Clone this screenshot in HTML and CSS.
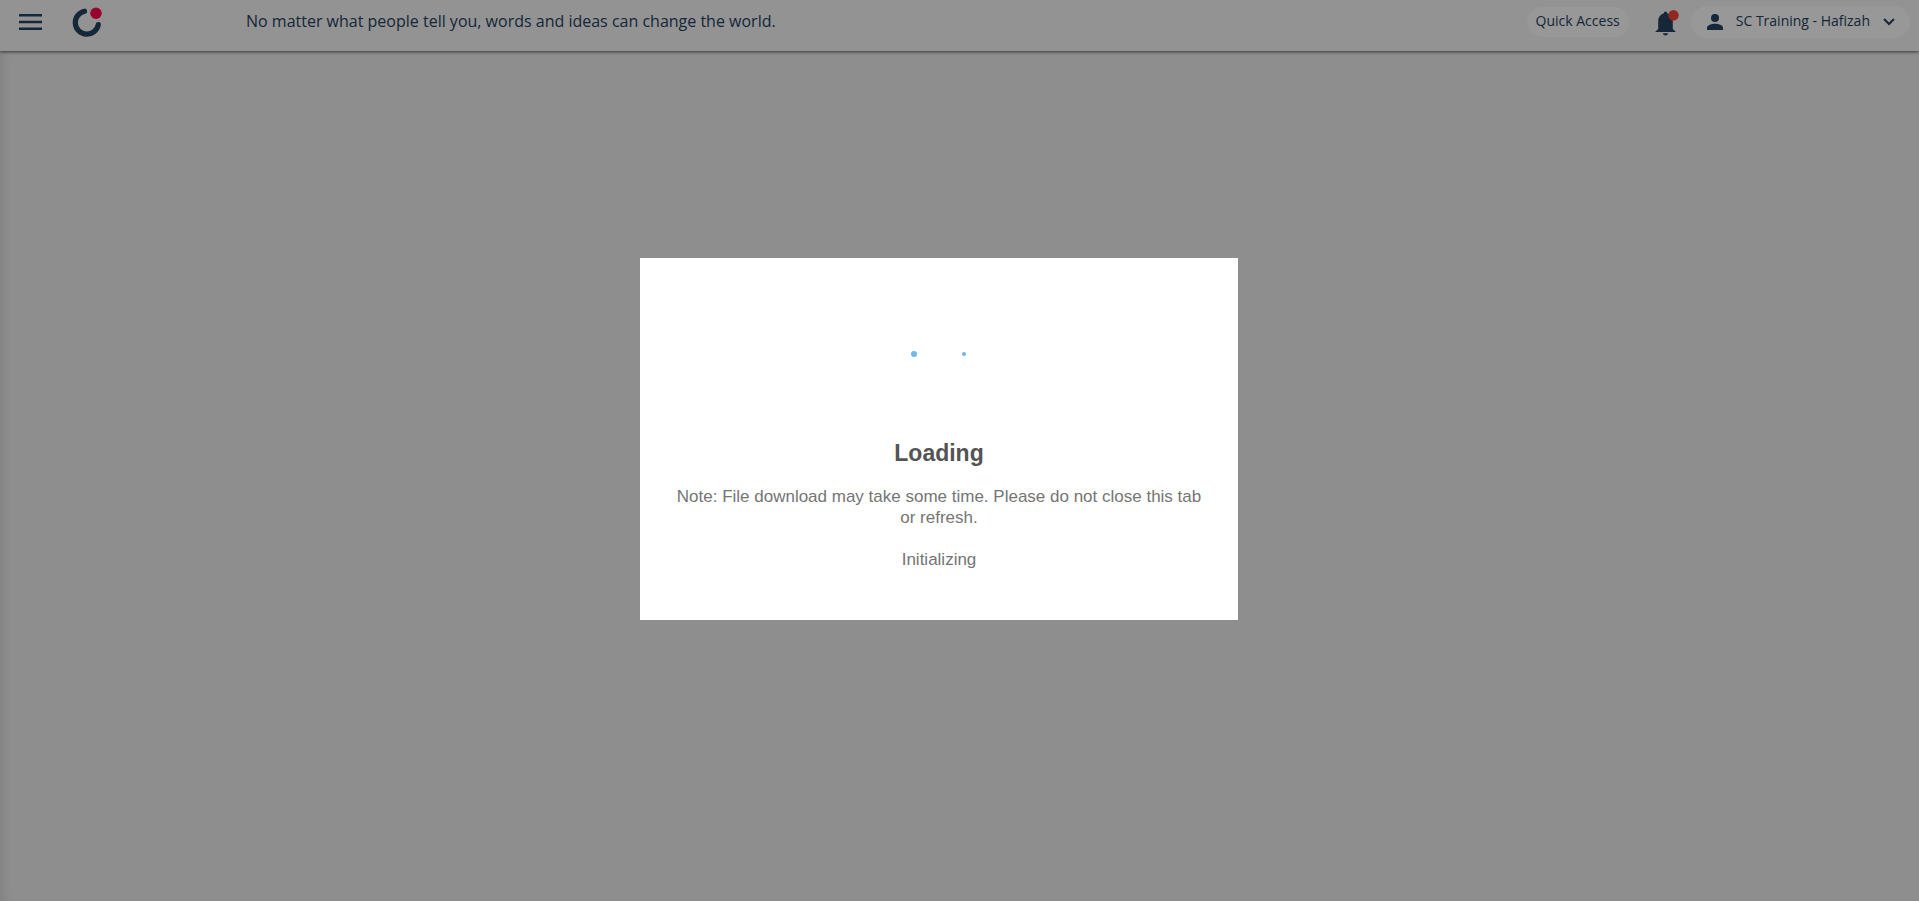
FILE: index.html
```html
<!DOCTYPE html>
<html lang="en">
<head>
<meta charset="utf-8">
<title>Loading</title>
<link rel="stylesheet" href="styles.css">
</head>
<body>
<header class="topbar">
  <button class="icon-button menu" type="button" aria-label="Menu">
    <svg width="23" height="16" viewBox="0 0 23 16"><path d="M0 1.200h23M0 8h23M0 14.800h23" stroke="currentColor" stroke-width="2.500"/></svg>
  </button>
  <a class="logo" href="#" aria-label="Home">
    <svg width="30" height="30" viewBox="0 0 30 30"><path d="M12.500 4.200A11.600 11.600 0 1 0 26.300 17.600" fill="none" stroke="currentColor" stroke-width="5.200" stroke-linecap="round"/><circle cx="24" cy="6.200" r="5.700" fill="#ff004c"/></svg>
  </a>
  <p class="quote">No matter what people tell you, words and ideas can change the world.</p>
  <button class="pill quick" type="button">Quick Access</button>
  <button class="icon-button bell" type="button" aria-label="Notifications">
    <svg width="24" height="26" viewBox="0 0 24 26"><path d="M10.500 1.500q-1.700 0-1.700 1.800Q3.200 5 3.200 11.500V19L.5 21.500V22H20.500v-.5L17.800 19v-7.500Q17.800 5 12.200 3.300q0-1.800-1.700-1.800ZM7.800 23.300q.5 2.200 2.700 2.200t2.700-2.200Z" fill="currentColor"/><circle cx="18.500" cy="5.200" r="5.200" fill="#f44336"/></svg>
  </button>
  <button class="pill account" type="button">
    <svg width="16" height="16" viewBox="0 0 16 16"><circle cx="8" cy="4" r="4" fill="currentColor"/><path d="M0 16v-2.200C0 11 5 9.800 8 9.800s8 1.200 8 4V16Z" fill="currentColor"/></svg>
    <span class="account-name">SC Training - Hafizah</span>
    <svg width="12" height="8" viewBox="0 0 12 8"><path d="M1 1l5 5 5-5" fill="none" stroke="currentColor" stroke-width="2"/></svg>
  </button>
</header>
<main class="content"></main>
<div class="overlay">
  <section class="dialog" role="dialog" aria-modal="true" aria-labelledby="dialog-title">
    <div class="spinner"><span class="dot dot-large"></span><span class="dot dot-small"></span></div>
    <h2 class="title" id="dialog-title">Loading</h2>
    <p class="message">Note: File download may take some time. Please do not close this tab or refresh.</p>
    <p class="message">Initializing</p>
  </section>
</div>
</body>
</html>
```
FILE: styles.css
```css
* { box-sizing: border-box; }
body {
  margin: 0;
  min-height: 100vh;
  display: flex;
  flex-direction: column;
  background: #ededed;
  color: #254160;
  font-family: "Open Sans", "Noto Sans", sans-serif;
}
button { border: 0; padding: 0; background: none; color: inherit; font: inherit; }
svg { display: block; }
.topbar {
  position: relative;
  z-index: 1;
  display: flex;
  align-items: flex-start;
  height: 51px;
  padding: 5px 9px 0 19px;
  background: #f5f5f5;
  box-shadow: 0 1px 3px rgba(0, 0, 0, .6);
}
.menu { margin-top: 9px; }
.logo { margin: 2px 0 0 30px; color: inherit; }
.quote { margin: 4px auto 0 144px; font-size: 16px; line-height: 24px; }
.pill {
  display: flex;
  align-items: center;
  border-radius: 16px;
  background: #fdfdfd;
  font-size: 14px;
  line-height: 20px;
}
.quick { height: 30px; margin-top: 2px; padding: 0 9px 2px; }
.bell { margin: 5px 12px 0 26px; }
.account { height: 32px; margin-top: 1px; padding: 0 15px 0 16px; gap: 13px; }
.account-name { padding-bottom: 2px; }
.content { flex: 1; box-shadow: inset 8px 0 8px -4px rgba(0, 0, 0, .09); }
.overlay {
  position: fixed;
  inset: 0;
  z-index: 2;
  display: flex;
  align-items: center;
  justify-content: center;
  padding: 0 41px 23px 0;
  background: rgba(0, 0, 0, .4);
}
.dialog {
  width: 598px;
  padding: 92px 28px 50px;
  background: #fff;
  font-family: "Liberation Sans", Arial, sans-serif;
  text-align: center;
}
.spinner { display: flex; align-items: center; justify-content: center; gap: 45px; height: 8px; padding-right: 2px; }
.dot { border-radius: 50%; background: #70b8e8; }
.dot-large { width: 6px; height: 6px; }
.dot-small { width: 4px; height: 4px; }
.title { margin: 79px 0 17px; color: #545454; font-size: 23px; line-height: 32px; }
.message { margin: 0 0 21px; color: #757575; font-size: 17px; line-height: 21px; }
.message:last-child { margin: 0; }
```
